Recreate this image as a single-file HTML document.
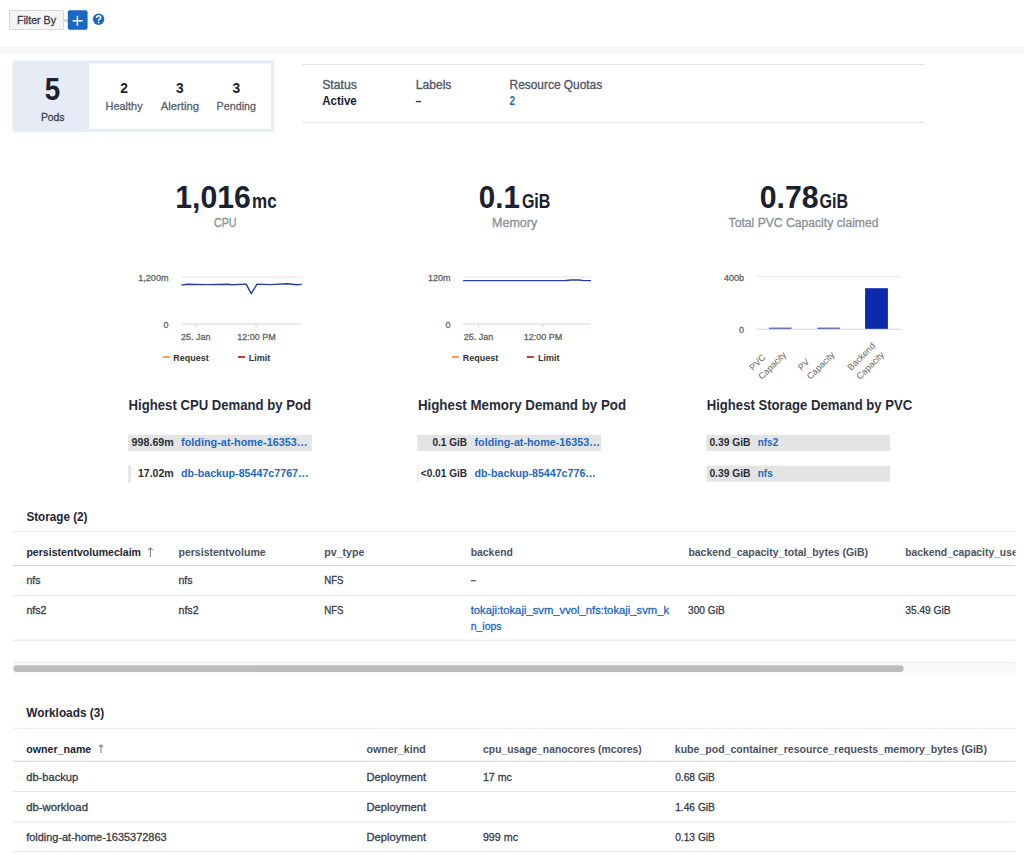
<!DOCTYPE html><html><head><meta charset="utf-8"><title>Namespace Overview</title><style>html,body{margin:0;padding:0;background:#fff;width:1024px;height:860px;overflow:hidden}svg{position:absolute;left:0;top:0}text{font-family:"Liberation Sans",sans-serif}</style></head><body>
<svg width="1024" height="860" viewBox="0 0 1024 860">
<rect x="9.5" y="10.5" width="54" height="19" fill="#f5f5f5" stroke="#d8d8d8" stroke-width="1" rx="1"/>
<rect x="63.5" y="19.2" width="4.5" height="3" fill="#d6d6d6" />
<rect x="67.8" y="10.2" width="19.8" height="19.5" fill="#1768c4" rx="2"/>
<rect x="72.5" y="20.05" width="10.2" height="1.5" fill="#ffffff" />
<rect x="76.65" y="15.8" width="1.5" height="10" fill="#ffffff" />
<circle cx="98.6" cy="19.2" r="5.7" fill="#1768c4"/>
<path d="M96.5,17.9 C96.5,16.5 97.4,15.8 98.6,15.8 C99.9,15.8 100.7,16.6 100.7,17.6 C100.7,18.6 100,19 99.4,19.4 C98.9,19.7 98.6,20 98.6,20.9" fill="none" stroke="#ffffff" stroke-width="1.5"/><circle cx="98.6" cy="22.6" r="0.85" fill="#ffffff"/>
<rect x="0" y="46.6" width="1024" height="7.4" fill="#f7f7f7" />
<rect x="12.4" y="60.3" width="261.5" height="71.5" fill="#e7ebf5" />
<rect x="89.3" y="63.6" width="181.6" height="65.2" fill="#ffffff" />
<line x1="302" y1="64.6" x2="925" y2="64.6" stroke="#e3e3e3" stroke-width="1" />
<line x1="302" y1="122.4" x2="925" y2="122.4" stroke="#e3e3e3" stroke-width="1" />
<rect x="415.8" y="100.9" width="5.2" height="1.3" fill="#30343d" />
<line x1="181.2" y1="277" x2="302" y2="277" stroke="#e6e6e6" stroke-width="1" />
<line x1="181.2" y1="324" x2="302" y2="324" stroke="#ccd6eb" stroke-width="1" />
<line x1="196.2" y1="324" x2="196.2" y2="327.5" stroke="#ccd6eb" stroke-width="1" />
<line x1="256.1" y1="324" x2="256.1" y2="327.5" stroke="#ccd6eb" stroke-width="1" />
<path d="M181.3,285.1 L187.5,284.3 L206.6,284.6 L227.7,284.3 L231.7,284.7 L246.2,284.1 L251.2,293.6 L257,284.1 L269.9,284.6 L287.1,283.8 L297,284.7 L301.8,284.4" fill="none" stroke="#2d3d9c" stroke-width="1.4" stroke-linejoin="round"/>
<rect x="162.9" y="356" width="6.7" height="2" fill="#eda24f" />
<rect x="238.0" y="356" width="7" height="2" fill="#c9393c" />
<line x1="463.1" y1="277" x2="591" y2="277" stroke="#e6e6e6" stroke-width="1" />
<line x1="463.1" y1="324" x2="591" y2="324" stroke="#ccd6eb" stroke-width="1" />
<line x1="478.4" y1="324" x2="478.4" y2="327.5" stroke="#ccd6eb" stroke-width="1" />
<line x1="542.8" y1="324" x2="542.8" y2="327.5" stroke="#ccd6eb" stroke-width="1" />
<path d="M463.1,280.6 L520,280.6 L566,280.5 L571,280.0 L579,280.0 L584,280.6 L591,280.6" fill="none" stroke="#2d3d9c" stroke-width="1.4" stroke-linejoin="round"/>
<rect x="452.0" y="356" width="6.7" height="2" fill="#eda24f" />
<rect x="526.8" y="356" width="7" height="2" fill="#c9393c" />
<line x1="756.9" y1="276.8" x2="900.9" y2="276.8" stroke="#e6e6e6" stroke-width="1" />
<rect x="768.9" y="327.6" width="22.6" height="1.6" fill="#4d5db3" />
<rect x="817.3" y="327.6" width="22.7" height="1.6" fill="#4d5db3" />
<rect x="865.1" y="288.2" width="22.8" height="40.8" fill="#0c2aab" />
<line x1="756.9" y1="329.3" x2="900.9" y2="329.3" stroke="#ccd6eb" stroke-width="1" />
<text x="753.1" y="371.1" font-size="9" fill="#666666" font-family="Liberation Sans" transform="rotate(-45 753.1 371.1)"><tspan x="753.1" dy="0">PVC</tspan><tspan x="753.1" dy="12.6">Capacity</tspan></text>
<text x="801.6" y="371.1" font-size="9" fill="#666666" font-family="Liberation Sans" transform="rotate(-45 801.6 371.1)"><tspan x="801.6" dy="0">PV</tspan><tspan x="801.6" dy="12.6">Capacity</tspan></text>
<text x="851.1" y="371.1" font-size="9" fill="#666666" font-family="Liberation Sans" transform="rotate(-45 851.1 371.1)"><tspan x="851.1" dy="0">Backend</tspan><tspan x="851.1" dy="12.6">Capacity</tspan></text>
<rect x="128.1" y="434.8" width="183.7" height="16.1" fill="#e4e4e4" />
<rect x="128.1" y="465.5" width="2.8" height="16.5" fill="#e4e4e4" />
<rect x="417.3" y="434.8" width="183.7" height="16.1" fill="#e4e4e4" />
<rect x="417.3" y="465.5" width="1.3" height="16.5" fill="#e4e4e4" />
<rect x="706.5" y="434.8" width="183.7" height="16.1" fill="#e4e4e4" />
<rect x="706.5" y="465.6" width="183.7" height="16.1" fill="#e4e4e4" />
<line x1="13" y1="531.7" x2="1015.5" y2="531.7" stroke="#eaecef" stroke-width="1" />
<path d="M150.4,557 V547.8 M148.2,550.2 L150.4,547.8 L152.6,550.2" fill="none" stroke="#8a8f99" stroke-width="1.2"/>
<clipPath id="cl1"><rect x="0" y="0" width="1015.5" height="860"/></clipPath>
<line x1="13" y1="565.6" x2="1015.5" y2="565.6" stroke="#d3d6d9" stroke-width="1" />
<rect x="470.9" y="580.2" width="5" height="1.1" fill="#3a3e48" />
<line x1="13" y1="595.7" x2="1015.5" y2="595.7" stroke="#e6e6e6" stroke-width="1" />
<line x1="13" y1="640.2" x2="1015.5" y2="640.2" stroke="#e6e6e6" stroke-width="1" />
<rect x="13" y="662.2" width="1002.5" height="12.3" fill="#f8f8f8" />
<line x1="13" y1="662.4" x2="1015.5" y2="662.4" stroke="#e9e9e9" stroke-width="1" />
<rect x="13.3" y="665.2" width="890.4" height="6.8" fill="#bdbdbd" rx="3.4"/>
<line x1="13" y1="728.3" x2="1015.5" y2="728.3" stroke="#eaecef" stroke-width="1" />
<path d="M101,753 V744.8 M98.8,747.2 L101,744.8 L103.2,747.2" fill="none" stroke="#8a8f99" stroke-width="1.2"/>
<line x1="13" y1="761.2" x2="1015.5" y2="761.2" stroke="#d3d6d9" stroke-width="1" />
<line x1="13" y1="791.5" x2="1015.5" y2="791.5" stroke="#e6e6e6" stroke-width="1" />
<line x1="13" y1="821.9" x2="1015.5" y2="821.9" stroke="#e6e6e6" stroke-width="1" />
<line x1="13" y1="851.6" x2="1015.5" y2="851.6" stroke="#e6e6e6" stroke-width="1" />
<text x="17" y="23.9" font-size="10.6" font-weight="400" fill="#373c47" text-anchor="start" textLength="39" lengthAdjust="spacingAndGlyphs" stroke="#373c47" stroke-width="0.3" >Filter By</text>
<text x="52.5" y="99.9" font-size="30.5" font-weight="700" fill="#1c2130" text-anchor="middle" textLength="15.4" lengthAdjust="spacingAndGlyphs" >5</text>
<text x="52.7" y="121" font-size="11" font-weight="400" fill="#3a4150" text-anchor="middle" textLength="23.6" lengthAdjust="spacingAndGlyphs" stroke="#3a4150" stroke-width="0.3" >Pods</text>
<text x="124.1" y="92.8" font-size="13.8" font-weight="700" fill="#1c2130" text-anchor="middle" >2</text>
<text x="124.1" y="110.4" font-size="11" font-weight="400" fill="#5a6170" text-anchor="middle" textLength="37.1" lengthAdjust="spacingAndGlyphs" stroke="#5a6170" stroke-width="0.3" >Healthy</text>
<text x="179.9" y="92.8" font-size="13.8" font-weight="700" fill="#1c2130" text-anchor="middle" >3</text>
<text x="179.9" y="110.4" font-size="11" font-weight="400" fill="#5a6170" text-anchor="middle" textLength="38.1" lengthAdjust="spacingAndGlyphs" stroke="#5a6170" stroke-width="0.3" >Alerting</text>
<text x="236.3" y="92.8" font-size="13.8" font-weight="700" fill="#1c2130" text-anchor="middle" >3</text>
<text x="236.3" y="110.4" font-size="11" font-weight="400" fill="#5a6170" text-anchor="middle" textLength="39.4" lengthAdjust="spacingAndGlyphs" stroke="#5a6170" stroke-width="0.3" >Pending</text>
<text x="322.2" y="88.6" font-size="12.2" font-weight="400" fill="#4e5563" text-anchor="start" textLength="34.6" lengthAdjust="spacingAndGlyphs" stroke="#4e5563" stroke-width="0.3" >Status</text>
<text x="322.2" y="105" font-size="12.2" font-weight="700" fill="#1c2130" text-anchor="start" textLength="34.6" lengthAdjust="spacingAndGlyphs" >Active</text>
<text x="415.7" y="88.6" font-size="12.2" font-weight="400" fill="#4e5563" text-anchor="start" textLength="35.7" lengthAdjust="spacingAndGlyphs" stroke="#4e5563" stroke-width="0.3" >Labels</text>
<text x="509.6" y="88.6" font-size="12.2" font-weight="400" fill="#4e5563" text-anchor="start" textLength="92.6" lengthAdjust="spacingAndGlyphs" stroke="#4e5563" stroke-width="0.3" >Resource Quotas</text>
<text x="509.6" y="104.9" font-size="12.2" font-weight="700" fill="#1e68bd" text-anchor="start" textLength="5.6" lengthAdjust="spacingAndGlyphs" >2</text>
<text x="175.3" y="208.1" font-size="32" font-weight="700" fill="#1c2130" text-anchor="start" textLength="75.6" lengthAdjust="spacingAndGlyphs" >1,016</text>
<text x="252" y="208.1" font-size="19.8" font-weight="700" fill="#1c2130" text-anchor="start" textLength="24.6" lengthAdjust="spacingAndGlyphs" >mc</text>
<text x="214" y="227" font-size="12" font-weight="400" fill="#8b9099" text-anchor="start" textLength="22.6" lengthAdjust="spacingAndGlyphs" stroke="#8b9099" stroke-width="0.3" >CPU</text>
<text x="478.8" y="208.1" font-size="32" font-weight="700" fill="#1c2130" text-anchor="start" textLength="41.1" lengthAdjust="spacingAndGlyphs" >0.1</text>
<text x="521.9" y="208.1" font-size="19.7" font-weight="700" fill="#1c2130" text-anchor="start" textLength="28.5" lengthAdjust="spacingAndGlyphs" >GiB</text>
<text x="492" y="227" font-size="12" font-weight="400" fill="#8b9099" text-anchor="start" textLength="45.2" lengthAdjust="spacingAndGlyphs" stroke="#8b9099" stroke-width="0.3" >Memory</text>
<text x="759.7" y="208.1" font-size="32" font-weight="700" fill="#1c2130" text-anchor="start" textLength="58.9" lengthAdjust="spacingAndGlyphs" >0.78</text>
<text x="819.6" y="208.1" font-size="19.7" font-weight="700" fill="#1c2130" text-anchor="start" textLength="28.6" lengthAdjust="spacingAndGlyphs" >GiB</text>
<text x="728.6" y="227" font-size="12" font-weight="400" fill="#8b9099" text-anchor="start" textLength="149.9" lengthAdjust="spacingAndGlyphs" stroke="#8b9099" stroke-width="0.3" >Total PVC Capacity claimed</text>
<text x="168.4" y="281.1" font-size="9" font-weight="400" fill="#666666" text-anchor="end" textLength="30.03" lengthAdjust="spacingAndGlyphs" stroke="#666666" stroke-width="0.3" >1,200m</text>
<text x="168.6" y="328.0" font-size="9" font-weight="400" fill="#666666" text-anchor="end" stroke="#666666" stroke-width="0.3" >0</text>
<text x="181.1" y="340.1" font-size="9" font-weight="400" fill="#666666" text-anchor="start" textLength="29.53" lengthAdjust="spacingAndGlyphs" stroke="#666666" stroke-width="0.3" >25. Jan</text>
<text x="237.2" y="340.1" font-size="9" font-weight="400" fill="#666666" text-anchor="start" textLength="38.53" lengthAdjust="spacingAndGlyphs" stroke="#666666" stroke-width="0.3" >12:00 PM</text>
<text x="173.3" y="360.9" font-size="9" font-weight="700" fill="#333333" text-anchor="start" textLength="35.52" lengthAdjust="spacingAndGlyphs" >Request</text>
<text x="248.7" y="360.9" font-size="9" font-weight="700" fill="#333333" text-anchor="start" textLength="21.5" lengthAdjust="spacingAndGlyphs" >Limit</text>
<text x="450.4" y="281.1" font-size="9" font-weight="400" fill="#666666" text-anchor="end" textLength="22.52" lengthAdjust="spacingAndGlyphs" stroke="#666666" stroke-width="0.3" >120m</text>
<text x="450.4" y="328.0" font-size="9" font-weight="400" fill="#666666" text-anchor="end" stroke="#666666" stroke-width="0.3" >0</text>
<text x="463.7" y="340.1" font-size="9" font-weight="400" fill="#666666" text-anchor="start" textLength="29.53" lengthAdjust="spacingAndGlyphs" stroke="#666666" stroke-width="0.3" >25. Jan</text>
<text x="523.7" y="340.1" font-size="9" font-weight="400" fill="#666666" text-anchor="start" textLength="38.53" lengthAdjust="spacingAndGlyphs" stroke="#666666" stroke-width="0.3" >12:00 PM</text>
<text x="462.7" y="360.9" font-size="9" font-weight="700" fill="#333333" text-anchor="start" textLength="35.52" lengthAdjust="spacingAndGlyphs" >Request</text>
<text x="537.9" y="360.9" font-size="9" font-weight="700" fill="#333333" text-anchor="start" textLength="21.5" lengthAdjust="spacingAndGlyphs" >Limit</text>
<text x="744" y="281" font-size="9" font-weight="400" fill="#666666" text-anchor="end" textLength="20.03" lengthAdjust="spacingAndGlyphs" stroke="#666666" stroke-width="0.3" >400b</text>
<text x="744" y="333" font-size="9" font-weight="400" fill="#666666" text-anchor="end" stroke="#666666" stroke-width="0.3" >0</text>
<text x="128.6" y="410.2" font-size="14.5" font-weight="700" fill="#282c38" text-anchor="start" textLength="182.5" lengthAdjust="spacingAndGlyphs" >Highest CPU Demand by Pod</text>
<text x="417.9" y="410.2" font-size="14.5" font-weight="700" fill="#282c38" text-anchor="start" textLength="208.2" lengthAdjust="spacingAndGlyphs" >Highest Memory Demand by Pod</text>
<text x="706.7" y="410.2" font-size="14.5" font-weight="700" fill="#282c38" text-anchor="start" textLength="205.6" lengthAdjust="spacingAndGlyphs" >Highest Storage Demand by PVC</text>
<text x="173.8" y="446.3" font-size="10.8" font-weight="700" fill="#2a2d35" text-anchor="end" textLength="42.2" lengthAdjust="spacingAndGlyphs" >998.69m</text>
<text x="181.1" y="446.3" font-size="10.8" font-weight="700" fill="#1e68bd" text-anchor="start" textLength="126.6" lengthAdjust="spacingAndGlyphs" >folding-at-home-16353…</text>
<text x="173.8" y="477.3" font-size="10.8" font-weight="700" fill="#2a2d35" text-anchor="end" textLength="35.9" lengthAdjust="spacingAndGlyphs" >17.02m</text>
<text x="181.1" y="477.3" font-size="10.8" font-weight="700" fill="#1e68bd" text-anchor="start" textLength="127.6" lengthAdjust="spacingAndGlyphs" >db-backup-85447c7767…</text>
<text x="467.1" y="446.3" font-size="10.8" font-weight="700" fill="#2a2d35" text-anchor="end" textLength="34.6" lengthAdjust="spacingAndGlyphs" >0.1 GiB</text>
<text x="474.5" y="446.3" font-size="10.8" font-weight="700" fill="#1e68bd" text-anchor="start" textLength="125.4" lengthAdjust="spacingAndGlyphs" >folding-at-home-16353…</text>
<text x="467.1" y="477.3" font-size="10.8" font-weight="700" fill="#2a2d35" text-anchor="end" textLength="46.3" lengthAdjust="spacingAndGlyphs" >&lt;0.01 GiB</text>
<text x="474.5" y="477.3" font-size="10.8" font-weight="700" fill="#1e68bd" text-anchor="start" textLength="121.5" lengthAdjust="spacingAndGlyphs" >db-backup-85447c776…</text>
<text x="709.4" y="446.3" font-size="10.8" font-weight="700" fill="#2a2d35" text-anchor="start" textLength="41.1" lengthAdjust="spacingAndGlyphs" >0.39 GiB</text>
<text x="757.7" y="446.3" font-size="10.8" font-weight="700" fill="#1e68bd" text-anchor="start" textLength="20.5" lengthAdjust="spacingAndGlyphs" >nfs2</text>
<text x="709.4" y="477.3" font-size="10.8" font-weight="700" fill="#2a2d35" text-anchor="start" textLength="41.1" lengthAdjust="spacingAndGlyphs" >0.39 GiB</text>
<text x="757.7" y="477.3" font-size="10.8" font-weight="700" fill="#1e68bd" text-anchor="start" textLength="15.07" lengthAdjust="spacingAndGlyphs" >nfs</text>
<text x="26.4" y="520.5" font-size="12" font-weight="700" fill="#1f2330" text-anchor="start" textLength="61.1" lengthAdjust="spacingAndGlyphs" >Storage (2)</text>
<text x="26.4" y="556.3" font-size="10.8" font-weight="700" fill="#22252e" text-anchor="start" textLength="114.6" lengthAdjust="spacingAndGlyphs" >persistentvolumeclaim</text>
<text x="178.5" y="556.3" font-size="10.8" font-weight="700" fill="#4a5262" text-anchor="start" textLength="87.1" lengthAdjust="spacingAndGlyphs" >persistentvolume</text>
<text x="324.2" y="556.3" font-size="10.8" font-weight="700" fill="#4a5262" text-anchor="start" textLength="40.3" lengthAdjust="spacingAndGlyphs" >pv_type</text>
<text x="470.7" y="556.3" font-size="10.8" font-weight="700" fill="#4a5262" text-anchor="start" textLength="42.2" lengthAdjust="spacingAndGlyphs" >backend</text>
<text x="688.4" y="556.3" font-size="10.8" font-weight="700" fill="#4a5262" text-anchor="start" textLength="179.6" lengthAdjust="spacingAndGlyphs" >backend_capacity_total_bytes (GiB)</text>
<text x="905.3" y="556.3" font-size="10.8" font-weight="700" fill="#4a5262" text-anchor="start" textLength="179.38" lengthAdjust="spacingAndGlyphs" clip-path="url(#cl1)">backend_capacity_used_bytes (GiB)</text>
<text x="26.4" y="584" font-size="11" font-weight="400" fill="#383c46" text-anchor="start" textLength="14.1" lengthAdjust="spacingAndGlyphs" stroke="#383c46" stroke-width="0.3" >nfs</text>
<text x="178.5" y="584" font-size="11" font-weight="400" fill="#383c46" text-anchor="start" textLength="14.1" lengthAdjust="spacingAndGlyphs" stroke="#383c46" stroke-width="0.3" >nfs</text>
<text x="324.2" y="584" font-size="11" font-weight="400" fill="#383c46" text-anchor="start" textLength="19.3" lengthAdjust="spacingAndGlyphs" stroke="#383c46" stroke-width="0.3" >NFS</text>
<text x="26.4" y="614.3" font-size="11" font-weight="400" fill="#383c46" text-anchor="start" textLength="20.1" lengthAdjust="spacingAndGlyphs" stroke="#383c46" stroke-width="0.3" >nfs2</text>
<text x="178.5" y="614.3" font-size="11" font-weight="400" fill="#383c46" text-anchor="start" textLength="20.1" lengthAdjust="spacingAndGlyphs" stroke="#383c46" stroke-width="0.3" >nfs2</text>
<text x="324.2" y="614.3" font-size="11" font-weight="400" fill="#383c46" text-anchor="start" textLength="19.3" lengthAdjust="spacingAndGlyphs" stroke="#383c46" stroke-width="0.3" >NFS</text>
<text x="470.7" y="613.6" font-size="11" font-weight="400" fill="#1e68bd" text-anchor="start" textLength="198.4" lengthAdjust="spacingAndGlyphs" stroke="#1e68bd" stroke-width="0.3" >tokaji:tokaji_svm_vvol_nfs:tokaji_svm_k</text>
<text x="470.7" y="630.2" font-size="11" font-weight="400" fill="#1e68bd" text-anchor="start" textLength="30.8" lengthAdjust="spacingAndGlyphs" stroke="#1e68bd" stroke-width="0.3" >n_iops</text>
<text x="688.1" y="614.3" font-size="11" font-weight="400" fill="#383c46" text-anchor="start" textLength="36.6" lengthAdjust="spacingAndGlyphs" stroke="#383c46" stroke-width="0.3" >300 GiB</text>
<text x="905.3" y="614.3" font-size="11" font-weight="400" fill="#383c46" text-anchor="start" textLength="45.3" lengthAdjust="spacingAndGlyphs" stroke="#383c46" stroke-width="0.3" >35.49 GiB</text>
<text x="26.2" y="717.1" font-size="12" font-weight="700" fill="#1f2330" text-anchor="start" textLength="78.1" lengthAdjust="spacingAndGlyphs" >Workloads (3)</text>
<text x="26.2" y="753" font-size="10.8" font-weight="700" fill="#22252e" text-anchor="start" textLength="65.1" lengthAdjust="spacingAndGlyphs" >owner_name</text>
<text x="366.5" y="753" font-size="10.8" font-weight="700" fill="#4a5262" text-anchor="start" textLength="59.2" lengthAdjust="spacingAndGlyphs" >owner_kind</text>
<text x="483.1" y="753" font-size="10.8" font-weight="700" fill="#4a5262" text-anchor="start" textLength="158.6" lengthAdjust="spacingAndGlyphs" >cpu_usage_nanocores (mcores)</text>
<text x="674.8" y="753" font-size="10.8" font-weight="700" fill="#4a5262" text-anchor="start" textLength="312.2" lengthAdjust="spacingAndGlyphs" >kube_pod_container_resource_requests_memory_bytes (GiB)</text>
<text x="26.2" y="780.6" font-size="11" font-weight="400" fill="#383c46" text-anchor="start" textLength="52.1" lengthAdjust="spacingAndGlyphs" stroke="#383c46" stroke-width="0.3" >db-backup</text>
<text x="366.5" y="780.6" font-size="11" font-weight="400" fill="#383c46" text-anchor="start" textLength="59.6" lengthAdjust="spacingAndGlyphs" stroke="#383c46" stroke-width="0.3" >Deployment</text>
<text x="482.9" y="780.6" font-size="11" font-weight="400" fill="#383c46" text-anchor="start" textLength="28.9" lengthAdjust="spacingAndGlyphs" stroke="#383c46" stroke-width="0.3" >17 mc</text>
<text x="675.2" y="780.6" font-size="11" font-weight="400" fill="#383c46" text-anchor="start" textLength="39.7" lengthAdjust="spacingAndGlyphs" stroke="#383c46" stroke-width="0.3" >0.68 GiB</text>
<text x="26.2" y="810.7" font-size="11" font-weight="400" fill="#383c46" text-anchor="start" textLength="61.8" lengthAdjust="spacingAndGlyphs" stroke="#383c46" stroke-width="0.3" >db-workload</text>
<text x="366.5" y="810.7" font-size="11" font-weight="400" fill="#383c46" text-anchor="start" textLength="59.6" lengthAdjust="spacingAndGlyphs" stroke="#383c46" stroke-width="0.3" >Deployment</text>
<text x="675.2" y="810.7" font-size="11" font-weight="400" fill="#383c46" text-anchor="start" textLength="39.7" lengthAdjust="spacingAndGlyphs" stroke="#383c46" stroke-width="0.3" >1.46 GiB</text>
<text x="26.2" y="840.7" font-size="11" font-weight="400" fill="#383c46" text-anchor="start" textLength="140.4" lengthAdjust="spacingAndGlyphs" stroke="#383c46" stroke-width="0.3" >folding-at-home-1635372863</text>
<text x="366.5" y="840.7" font-size="11" font-weight="400" fill="#383c46" text-anchor="start" textLength="59.6" lengthAdjust="spacingAndGlyphs" stroke="#383c46" stroke-width="0.3" >Deployment</text>
<text x="482.9" y="840.7" font-size="11" font-weight="400" fill="#383c46" text-anchor="start" textLength="35.1" lengthAdjust="spacingAndGlyphs" stroke="#383c46" stroke-width="0.3" >999 mc</text>
<text x="675.2" y="840.7" font-size="11" font-weight="400" fill="#383c46" text-anchor="start" textLength="39.7" lengthAdjust="spacingAndGlyphs" stroke="#383c46" stroke-width="0.3" >0.13 GiB</text>
</svg></body></html>
